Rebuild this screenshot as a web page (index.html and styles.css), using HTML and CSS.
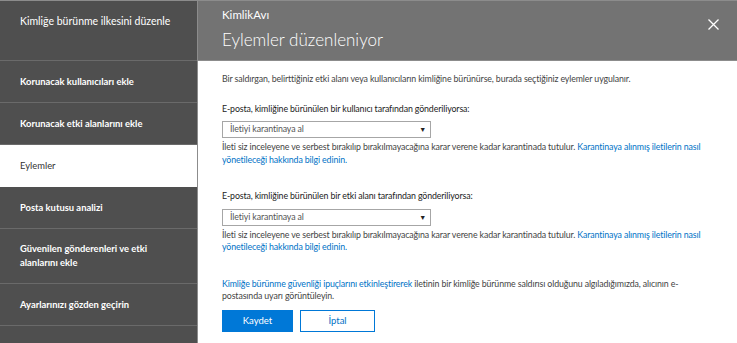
FILE: index.html
```html
<!DOCTYPE html>
<html lang="tr">
<head>
    <meta charset="UTF-8">
    <meta name="viewport" content="width=device-width, initial-scale=1.0">
    <title>Kimliğe bürünme ilkesini düzenle</title>
    <link rel="stylesheet" href="styles.css">
</head>
<body>

    <div class="sidebar">
        <div class="sidebar-title">Kimliğe bürünme ilkesini düzenle</div>
        <div class="nav-item">Korunacak kullanıcıları ekle</div>
        <div class="nav-item">Korunacak etki alanlarını ekle</div>
        <div class="nav-item active">Eylemler</div>
        <div class="nav-item">Posta kutusu analizi</div>
        <div class="nav-item tall">Güvenilen gönderenleri ve etki alanlarını ekle</div>
        <div class="nav-item">Ayarlarınızı gözden geçirin</div>
    </div>

    <div class="panel">
        <div class="panel-header">
            <div class="panel-sub">KimlikAvı</div>
            <h1>Eylemler düzenleniyor</h1>
            <button class="close" type="button" aria-label="Kapat">
                <svg width="11" height="11" viewBox="0 0 11 11">
                    <path d="M0.5 0.5 L10.5 10.5 M10.5 0.5 L0.5 10.5" stroke="#fff" stroke-width="1.3" fill="none"/>
                </svg>
            </button>
        </div>

        <div class="panel-body">
            <p class="intro">Bir saldırgan, belirttiğiniz etki alanı veya kullanıcıların kimliğine bürünürse, burada seçtiğiniz eylemler uygulanır.</p>

            <div class="field">
                <label for="user-action">E-posta, kimliğine bürünülen bir kullanıcı tarafından gönderiliyorsa:</label>
                <div class="select-box" id="user-action">
                    <span>İletiyi karantinaya al</span>
                    <span class="caret">▼</span>
                </div>
                <p class="hint">İleti siz inceleyene ve serbest bırakılıp bırakılmayacağına karar verene kadar karantinada tutulur. <a href="#">Karantinaya alınmış iletilerin nasıl yönetileceği hakkında bilgi edinin.</a></p>
            </div>

            <div class="field">
                <label for="domain-action">E-posta, kimliğine bürünülen bir etki alanı tarafından gönderiliyorsa:</label>
                <div class="select-box" id="domain-action">
                    <span>İletiyi karantinaya al</span>
                    <span class="caret">▼</span>
                </div>
                <p class="hint">İleti siz inceleyene ve serbest bırakılıp bırakılmayacağına karar verene kadar karantinada tutulur. <a href="#">Karantinaya alınmış iletilerin nasıl yönetileceği hakkında bilgi edinin.</a></p>
            </div>

            <p class="tips"><a href="#">Kimliğe bürünme güvenliği ipuçlarını etkinleştirerek</a> iletinin bir kimliğe bürünme saldırısı olduğunu algıladığımızda, alıcının e-postasında uyarı görüntüleyin.</p>

            <div class="actions">
                <button class="btn primary" type="button">Kaydet</button>
                <button class="btn" type="button">İptal</button>
            </div>
        </div>
    </div>

</body>
</html>
```

FILE: styles.css
```css
body {
    margin: 0;
    height: 343px;
    display: flex;
    font-family: 'Lato', 'Open Sans', sans-serif;
    background-color: #fff;
    overflow: hidden;
}

/* Left navigation */
.sidebar {
    flex: 0 0 197px;
    background-color: #4f4f4f;
    color: #fff;
    border-top: 1px solid #8c8c8c;
}

.sidebar-title {
    height: 60px;
    padding: 14px 20px 0;
    box-sizing: border-box;
    font-size: 10.5px;
    border-bottom: 1px solid #6a6a6a;
}

.nav-item {
    height: 41px;
    display: flex;
    align-items: center;
    padding: 0 20px;
    font-size: 9.4px;
    font-weight: 700;
    border-bottom: 1px solid #6a6a6a;
}

.nav-item.tall {
    height: 54px;
    line-height: 1.45;
}

.nav-item.active {
    background-color: #fff;
    color: #333;
    font-weight: 400;
    border-bottom-color: #fff;
}

/* Right panel */
.panel {
    flex: 1;
    min-width: 0;
    border-left: 1px solid #8c8c8c;
    display: flex;
    flex-direction: column;
}

.panel-header {
    position: relative;
    height: 59px;
    background-color: #737373;
    color: #fff;
    padding: 0 24px;
    border-top: 1px solid #8c8c8c;
    border-bottom: 1px solid #8c8c8c;
}

.panel-sub {
    font-size: 11.5px;
    padding-top: 7px;
}

.panel-header h1 {
    margin: 8px 0 0;
    font-size: 17px;
    font-weight: 300;
}

.close {
    position: absolute;
    top: 17px;
    right: 18px;
    background: none;
    border: none;
    padding: 0;
    cursor: pointer;
}

.panel-body {
    padding: 12px 25px 0 24px;
    font-size: 8.8px;
    letter-spacing: -0.12px;
    line-height: 12.5px;
    color: #444;
}

.panel-body p {
    margin: 0;
}

.panel-body a {
    color: #0072c6;
    text-decoration: none;
}

.panel-body .intro {
    margin-bottom: 17px;
}

.field {
    margin-bottom: 24px;
}

.field label {
    display: block;
    color: #222;
    margin-bottom: 6px;
}

.select-box {
    width: 196px;
    height: 15px;
    border: 1px solid #a6a6a6;
    display: flex;
    align-items: center;
    justify-content: space-between;
    padding: 0 4px 0 7px;
    margin-bottom: 3px;
    color: #555;
}

.caret {
    font-size: 7px;
    color: #222;
}

.actions {
    display: flex;
    gap: 7px;
    margin-top: 7px;
}

.btn {
    width: 75px;
    height: 22px;
    font-family: inherit;
    font-size: 9.5px;
    background-color: #fff;
    color: #0072c6;
    border: 1px solid #0078d7;
    padding: 0;
}

.btn.primary {
    width: 71px;
    background-color: #0078d7;
    color: #fff;
}
```
